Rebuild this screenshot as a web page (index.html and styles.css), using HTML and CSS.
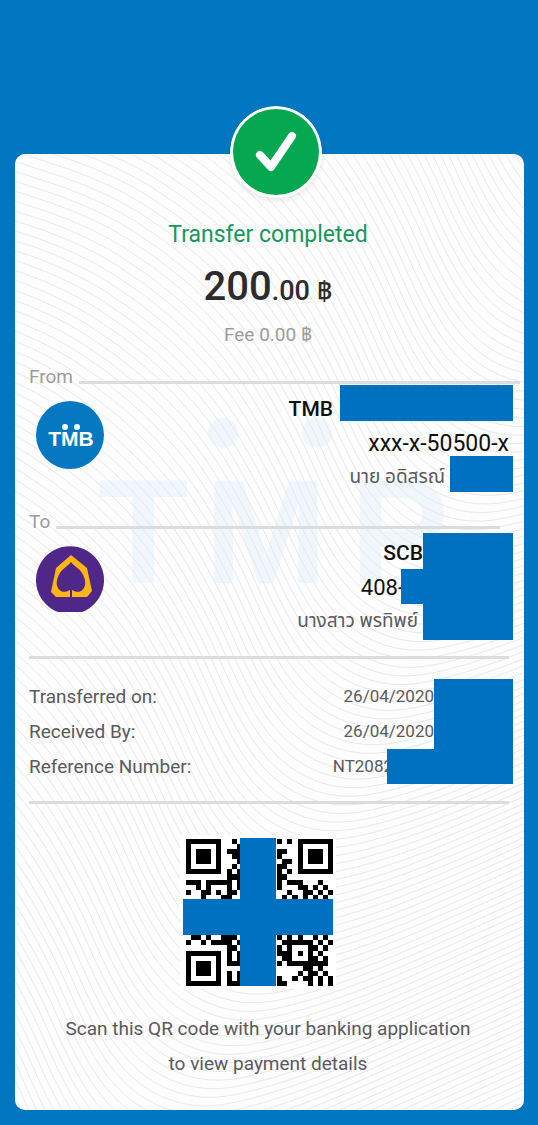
FILE: index.html
```html
<!DOCTYPE html>
<html lang="en">
<head>
<meta charset="utf-8">
<meta name="viewport" content="width=device-width, initial-scale=1">
<title>Transfer completed</title>
<link rel="stylesheet" href="styles.css">
</head>
<body>
<main class="receipt">
  <svg class="backdrop" viewBox="15 154 509 956" preserveAspectRatio="xMidYMid slice" aria-hidden="true">
    <g class="watermark">
      <text x="98" y="583">T</text>
      <text x="204" y="583">M</text>
      <text x="350" y="583">P</text>
      <circle cx="223" cy="433" r="15"/>
      <circle cx="317" cy="433" r="15"/>
    </g>
    <g class="waves" id="waves"></g>
  </svg>

  <svg class="badge" viewBox="0 0 92 92" role="img" aria-label="Success">
    <circle cx="46" cy="46" r="46" fill="#fff"/>
    <circle cx="46" cy="46" r="43" fill="#05a850"/>
    <path d="M30 49L41 61L62 30" fill="none" stroke="#fff" stroke-width="8" stroke-linecap="round" stroke-linejoin="round"/>
  </svg>

  <header class="summary">
    <h1 class="status">Transfer completed</h1>
    <p class="amount">200<span class="amount-minor">.00 ฿</span></p>
    <p class="fee">Fee 0.00 ฿</p>
  </header>

  <section class="party">
    <div class="party-head party-head-wide"><h2 class="party-label">From</h2><span class="rule"></span></div>
    <div class="party-body">
      <svg class="logo" viewBox="0 0 69 69" role="img" aria-label="TMB">
        <circle cx="34" cy="34" r="34" fill="#0678c1"/>
        <text x="35" y="45" class="logo-text">TMB</text>
        <circle cx="29" cy="26" r="3" fill="#fff"/>
        <circle cx="41" cy="26" r="3" fill="#fff"/>
      </svg>
      <div class="party-info">
        <p class="line bank">TMB<span class="mask mask-bank"></span></p>
        <p class="line account">xxx-x-50500-x</p>
        <p class="line name">นาย อดิสรณ์<span class="mask mask-name"></span></p>
      </div>
    </div>
  </section>

  <section class="party party-to">
    <div class="party-head"><h2 class="party-label">To</h2><span class="rule"></span></div>
    <div class="party-body">
      <svg class="logo" viewBox="0 0 69 69" role="img" aria-label="SCB">
        <path d="M22 67A34 34 0 1 1 46 67Z" fill="#4e2788"/>
        <path fill="#fdb515" d="M35 10L51 23L56 46L51 52H20L15 47L20 23Z"/>
        <path d="M35 17C32 21 27 23 24 28C19 36 20 43 25 46C28 48 32 46 34 45V53H36V45C38 46 42 48 45 46C50 43 51 36 46 28C43 23 38 21 35 17Z" fill="#4e2788"/>
      </svg>
      <div class="party-info">
        <p class="line bank">SCB<span class="mask mask-to"></span></p>
        <p class="line account account-cut">408-<span class="mask mask-account"></span></p>
        <p class="line name">นางสาว พรทิพย์<span class="mask mask-to"></span></p>
      </div>
    </div>
  </section>

  <hr class="divider">
  <dl class="details">
    <div class="detail"><dt>Transferred on:</dt><dd>26/04/2020<span class="mask mask-time"></span></dd></div>
    <div class="detail"><dt>Received By:</dt><dd>26/04/2020<span class="mask mask-time"></span></dd></div>
    <div class="detail"><dt>Reference Number:</dt><dd>NT2082<span class="mask mask-ref"></span></dd></div>
  </dl>
  <hr class="divider">

  <section class="scan">
    <svg class="qr" viewBox="180 835 156 154" role="img" aria-label="QR code">
      <g id="qr" shape-rendering="crispEdges"></g>
      <path d="M240 838h36v61h57v36h-57v51h-36v-51h-57v-36h57z" fill="#0070c0"/>
    </svg>
    <p class="caption">Scan this QR code with your banking application<br>to view payment details</p>
  </section>
</main>
<script src="app.js"></script>
</body>
</html>
```
FILE: styles.css
```css
* {
  box-sizing: border-box;
}

body {
  margin: 0;
  min-height: 100vh;
  padding: 154px 14px 15px 15px;
  background: #0077c0;
  color: #5a5a5c;
  font-family: Roboto, "Noto Sans Thai", "Noto Sans", sans-serif;
  font-size: 19px;
}

h1, h2, p, dl, dd {
  margin: 0;
  font-weight: 400;
}

.receipt {
  position: relative;
  padding: 63px 11px 29px 14px;
  background: #fdfdfd;
  border-radius: 10px;
}

.backdrop {
  position: absolute;
  inset: 0;
  width: 100%;
  height: 100%;
  border-radius: 10px;
}

.waves {
  fill: none;
  stroke: #e8e8ea;
  stroke-width: 1;
}

.watermark {
  fill: #eff7fd;
  font: 700 148px "Liberation Sans", sans-serif;
}

.badge {
  position: absolute;
  top: -48px;
  left: 50%;
  width: 92px;
  margin-left: -40px;
  border-radius: 50%;
  box-shadow: 0 3px 5px rgba(0, 0, 0, 0.08);
}

.summary, .party, .divider, .details, .scan {
  position: relative;
}

.summary {
  padding: 0 6px 22px 0;
  text-align: center;
}

.status {
  color: #16985a;
  font-size: 23px;
  line-height: 36px;
}

.amount {
  padding-top: 8px;
  color: #2c2c2e;
  font-size: 40px;
  font-weight: 500;
  line-height: 52px;
}

.amount-minor {
  font-size: 27px;
}

.fee {
  padding-top: 6px;
  color: #9c9c9e;
  line-height: 24px;
}

.party-head {
  display: flex;
  align-items: flex-end;
  gap: 6px;
  padding-right: 13px;
}

.party-head-wide {
  margin-right: -7px;
  padding-right: 0;
}

.party-label {
  color: #9c9c9e;
  font-size: 19px;
  line-height: 16px;
}

.rule {
  flex: 1;
  height: 3px;
  margin-bottom: 1px;
  background: #dcdcde;
}

.party-to {
  padding-top: 22px;
}

.party-to .party-head {
  margin-bottom: 3px;
}

.party-body {
  display: flex;
  justify-content: space-between;
  padding-left: 7px;
}

.logo {
  width: 69px;
  height: 69px;
  margin-top: 16px;
}

.party-to .logo {
  margin-top: 12px;
}

.logo-text {
  fill: #fff;
  font: 700 21px "Liberation Sans", sans-serif;
  text-anchor: middle;
}

.line {
  display: flex;
  justify-content: flex-end;
  align-items: flex-end;
  height: 36px;
  line-height: 30px;
}

.bank {
  color: #111;
  font-size: 21px;
  font-weight: 500;
  line-height: 24px;
}

.account {
  height: 35px;
  padding-right: 4px;
  color: #111;
  font-size: 23px;
  line-height: 24px;
}

.account-cut {
  padding-right: 0;
  font-size: 22px;
  line-height: 32px;
}

.party-to .bank {
  line-height: 32px;
}

.party-to .name {
  align-items: flex-start;
  line-height: 34px;
}

.mask {
  flex: none;
  align-self: stretch;
  background: #0070c0;
}

.mask-bank {
  width: 173px;
  margin-left: 7px;
}

.mask-name {
  width: 63px;
  margin-left: 5px;
}

.mask-to {
  width: 90px;
}

.name .mask-to {
  margin-left: 5px;
}

.mask-account {
  width: 112px;
  margin-left: -3px;
}

.mask-time {
  width: 79px;
}

.mask-ref {
  width: 126px;
  margin-left: -6px;
}

.divider {
  height: 3px;
  margin: 16px 4px 16px 0;
  border: 0;
  background: #dcdcde;
}

.details {
  padding: 4px 0 1px;
}

.detail, .detail dd {
  display: flex;
  justify-content: space-between;
}

.detail {
  height: 35px;
  line-height: 35px;
}

.detail dd {
  font-size: 17px;
}

.scan {
  display: flex;
  flex-direction: column;
  align-items: center;
  padding: 15px 6px 0 0;
}

.qr {
  width: 156px;
  margin-right: 20px;
  background: #fff;
}

.caption {
  padding-top: 22px;
  line-height: 35px;
  text-align: center;
}
```
FILE: app.js
```js
const NS = "http://www.w3.org/2000/svg";

function add(parent, d, attrs) {
  const path = document.createElementNS(NS, "path");
  path.setAttribute("d", d);
  for (const key in attrs) path.setAttribute(key, attrs[key]);
  parent.appendChild(path);
}

// One S-shaped contour, repeated along a diagonal.
const points = [
  [-700, -460], [-607, -443], [-515, -425], [-425, -404], [-339, -373], [-277, -334],
  [-227, -291], [-182, -239], [-138, -162], [-109, -95], [-81, -47], [-46, -15],
  [0, 0], [50, -7], [132, -34], [250, -86], [410, -158], [560, -225]
];
let contour = `M${points[0]}`;
for (let i = 1; i < points.length - 1; i++) {
  const [x, y] = points[i], [nx, ny] = points[i + 1];
  contour += `Q${x} ${y} ${(x + nx) / 2} ${(y + ny) / 2}`;
}
const waves = document.getElementById("waves");
for (let i = -65; i < 85; i++) {
  add(waves, contour, { transform: `translate(${412 - 4 * i} ${644 + 8.6 * i})` });
}

// Dark modules by row; the finder and alignment squares are added below.
const modules = {
  0: [9, 18, 20], 1: [10], 2: [8, 9, 10, 18, 19], 3: [9, 10, 18],
  4: [10, 19, 20], 5: [9, 18, 19], 6: [8, 10, 18, 20], 7: [8, 9, 10, 18, 19],
  8: [0, 1, 2, 4, 5, 6, 7, 8, 10, 18, 20, 21, 22, 26],
  9: [2, 4, 8, 10, 18, 22, 23, 25, 27],
  10: [0, 3, 4, 6, 8, 9, 20, 23, 24, 26, 28],
  11: [3, 7, 8, 19, 21, 23, 25, 27],
  19: [1, 2, 4, 7, 8, 9, 18, 20, 22, 25, 27],
  20: [0, 3, 5, 6, 7, 8, 10, 19, 26, 28],
  21: [8, 9, 18, 25, 27], 22: [8, 10, 18, 19, 26],
  23: [8, 10, 19, 25, 27], 24: [8, 9, 10, 18, 25, 26, 27],
  25: [23, 24, 26], 26: [8, 10, 22, 24, 25, 27],
  27: [8, 10, 18, 21, 23, 24, 26, 28], 28: [8, 9, 10, 18, 19, 24, 26, 28]
};
const size = 147 / 29;
let d = "";
const box = (c, r, n) => {
  const x = 186 + c * size, y = 839 + r * size, w = n * size;
  return `M${x} ${y}h${w}v${w}h${-w}z`;
};
for (const r in modules) for (const c of modules[r]) d += box(c, Number(r), 1);
for (const [c, r] of [[0, 0], [22, 0], [0, 22]]) {
  d += box(c, r, 7) + box(c + 1, r + 1, 5) + box(c + 2, r + 2, 3);
}
d += box(20, 20, 5) + box(21, 21, 3) + box(22, 22, 1);
add(document.getElementById("qr"), d, { "fill-rule": "evenodd" });
```
